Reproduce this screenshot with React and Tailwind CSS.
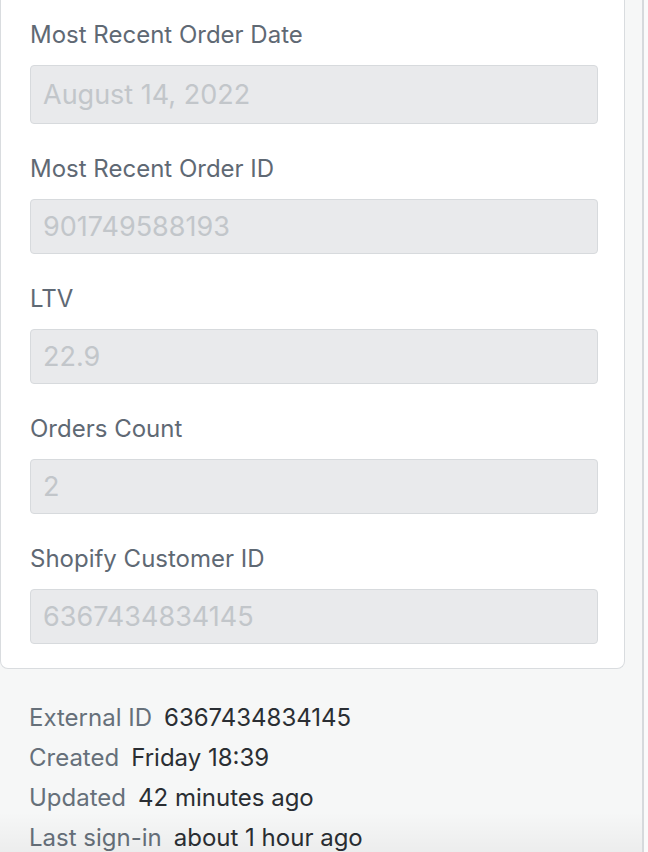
import React from 'react';

const fields = [
  { label: 'Most Recent Order Date', value: 'August 14, 2022', tall: true },
  { label: 'Most Recent Order ID', value: '901749588193' },
  { label: 'LTV', value: '22.9' },
  { label: 'Orders Count', value: '2' },
  { label: 'Shopify Customer ID', value: '6367434834145' },
];

const meta = [
  { label: 'External ID', value: '6367434834145' },
  { label: 'Created', value: 'Friday 18:39' },
  { label: 'Updated', value: '42 minutes ago' },
  { label: 'Last sign-in', value: 'about 1 hour ago' },
];

const Field = ({ label, value, tall }) => (
  <div className="flex flex-col">
    <label className="h-[30px] leading-[30px] text-[24px] text-[#5f6974]">{label}</label>
    <input
      disabled
      value={value}
      readOnly
      className={`mt-[15px] ${tall ? 'h-[59px]' : 'h-[55px]'} w-full rounded-[4px] border border-[#d7dadd] bg-[#e9eaec] px-[12px] text-[27px] text-[#c2c6ca] outline-none`}
    />
  </div>
);

export default function App() {
  return (
    <div
      className="relative flex h-[852px] w-[648px] overflow-hidden bg-[#f6f7f7]"
      style={{ fontFamily: 'Inter, "Liberation Sans", sans-serif' }}
    >
      <div className="flex w-[642px] flex-col">
        <div className="w-[625px] rounded-b-[8px] border-x border-b border-[#d9dcdf] bg-white pb-[24px] pl-[29px] pr-[26px] pt-[20px]">
          <div className="flex flex-col gap-[30px]">
            {fields.map((f) => (
              <Field key={f.label} {...f} />
            ))}
          </div>
        </div>

        <div className="mt-[29px] flex flex-col pl-[29px]">
          {meta.map((m) => (
            <div key={m.label} className="flex h-[40px] items-center gap-[12px] text-[24px] leading-[40px]">
              <span className="text-[#66707a]">{m.label}</span>
              <span className="text-[#2a2e33]">{m.value}</span>
            </div>
          ))}
        </div>
      </div>

      <div className="w-[2px] bg-[#d6d9dc]" />
      <div className="flex-1 bg-[#fafafa]" />

      <div className="pointer-events-none absolute bottom-0 left-0 h-[40px] w-[642px] bg-gradient-to-b from-transparent to-black/[0.04]" />
    </div>
  );
}
